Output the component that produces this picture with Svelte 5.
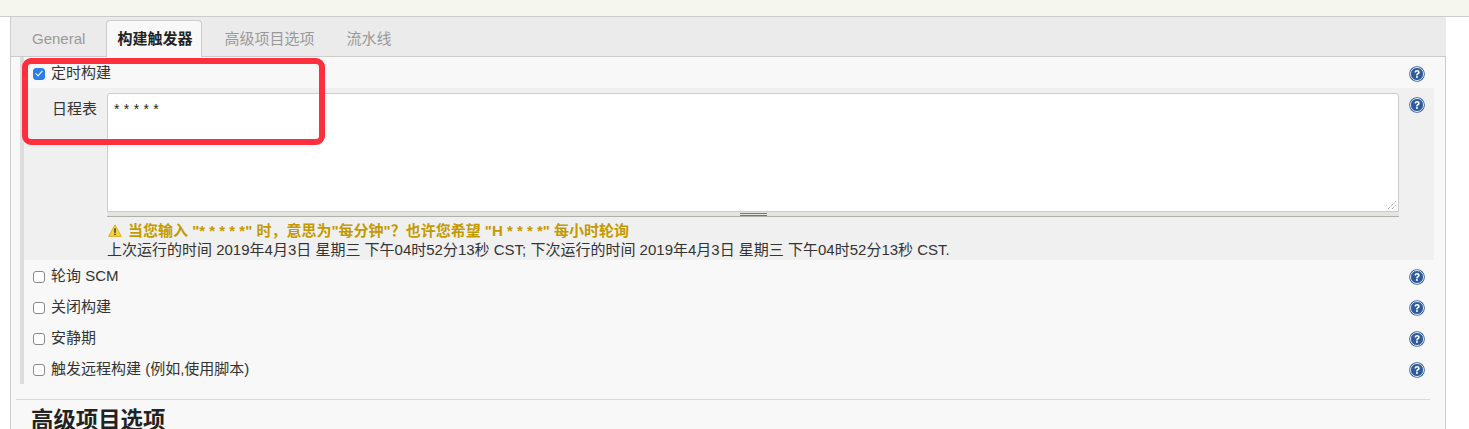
<script>
  const tabs = [
    { label: 'General', active: false },
    { label: '构建触发器', active: true },
    { label: '高级项目选项', active: false },
    { label: '流水线', active: false }
  ];
  const triggers = ['轮询 SCM', '关闭构建', '安静期', '触发远程构建 (例如,使用脚本)'];
</script>

{#snippet help()}
  <svg class="help" width="16" height="16" viewBox="0 0 16 16">
    <circle cx="8" cy="8" r="7.8" fill="#2f5a98" />
    <circle cx="8" cy="8" r="6.5" fill="none" stroke="#e6edf6" stroke-width="1" />
    <circle cx="8" cy="8" r="5.6" fill="#2d5b9b" />
    <path d="M5.5 6.4C5.6 4.8 6.7 4 8.1 4c1.5 0 2.6.8 2.6 2.2 0 1-.6 1.6-1.3 2-.5.3-.7.6-.7 1.2H7.2c0-1 .3-1.6 1-2.1.5-.3.8-.6.8-1.1 0-.5-.4-.8-.9-.8-.6 0-1 .4-1 1z" fill="#fff" />
    <rect x="7.1" y="10.1" width="1.7" height="1.8" fill="#fff" />
  </svg>
{/snippet}

<div class="page">
  <div class="topband"></div>
  <div class="panel">
    <nav class="tabs">
      {#each tabs as t}
        <span class="tab" class:active={t.active}>{t.label}</span>
      {/each}
    </nav>
    <div class="content">
      <div class="section">
        <div class="row">
          <input type="checkbox" checked />
          <span class="label">定时构建</span>
          {@render help()}
        </div>
        <div class="schedule">
          <div class="sch-label">日程表</div>
          <div class="sch-main">
            <div class="area">* * * * *<svg class="resize" width="10" height="10" viewBox="0 0 10 10"><path d="M1 9L9 1M5 9L9 5" stroke="#777" stroke-width="1" stroke-dasharray="1 1" fill="none"/></svg></div>
            <div class="grip"><span></span></div>
            <div class="warn">
              <svg width="14" height="13" viewBox="0 0 14 13"><path d="M7 .8L13.4 12.4H.6z" fill="#f6d23c" stroke="#d8a814" stroke-width=".8" stroke-linejoin="round"/><rect x="6.3" y="4.2" width="1.4" height="4.6" fill="#333"/><rect x="6.3" y="9.6" width="1.4" height="1.5" fill="#333"/></svg>
              <span>当您输入 "* * * * *" 时，意思为"每分钟"？也许您希望 "H * * * *" 每小时轮询</span>
            </div>
            <div class="info">上次运行的时间 2019年4月3日 星期三 下午04时52分13秒 CST; 下次运行的时间 2019年4月3日 星期三 下午04时52分13秒 CST.</div>
          </div>
          <div class="sch-help">{@render help()}</div>
        </div>
        {#each triggers as t}
          <div class="row">
            <input type="checkbox" />
            <span class="label">{t}</span>
            {@render help()}
          </div>
        {/each}
      </div>
      <div class="divider"></div>
      <h2>高级项目选项</h2>
    </div>
    <div class="mark"></div>
  </div>
</div>

<style>
  :global(body) {
    margin: 0;
    background: #fff;
    overflow: hidden;
  }
  .page {
    height: 429px;
    overflow: hidden;
    font-family: "Liberation Sans", "Noto Sans CJK SC", sans-serif;
    font-size: 15px;
    color: #333;
  }
  .topband {
    height: 16px;
    background: #f5f7ef;
    border-bottom: 1px solid #ccc;
  }
  .panel {
    position: relative;
    margin-left: 10px;
    width: 1436px;
    box-sizing: border-box;
    height: 412px;
    background: #f8f8f8;
    border-left: 1px solid #ccc;
    border-right: 1px solid #ccc;
  }
  .tabs {
    display: flex;
    height: 40px;
    box-sizing: border-box;
    background: #ebebeb;
    border-bottom: 1px solid #ccc;
    padding: 3px 0 0 10px;
    margin-right: -1px;
  }
  .tab {
    display: block;
    height: 36px;
    line-height: 38px;
    padding: 0 11px;
    margin-right: 10px;
    color: #999;
  }
  .tab.active {
    height: 37px;
    line-height: 36px;
    color: #222;
    font-weight: bold;
    background: #f8f8f8;
    border: 1px solid #ccc;
    border-bottom: none;
    border-radius: 4px 4px 0 0;
    box-sizing: border-box;
    margin-right: 11px;
    width: 96px;
    padding: 0 0 0 10px;
  }
  .content {
    padding-left: 9px;
  }
  .section {
    border-left: 4px solid #ddd;
    height: 327px;
    width: 1410px;
  }
  .row {
    display: flex;
    align-items: center;
    height: 31px;
    padding: 3px 0 0 9px;
    box-sizing: border-box;
  }
  input[type="checkbox"] {
    appearance: none;
    flex: none;
    position: relative;
    width: 12px;
    height: 12px;
    box-sizing: border-box;
    margin: 0 6px 0 0;
    background: #fff;
    border: 1px solid #8a8a8a;
    border-radius: 3px;
  }
  input[type="checkbox"]:checked {
    background: #2b7de9;
    border-color: #2b7de9;
  }
  input[type="checkbox"]:checked::after {
    content: "";
    position: absolute;
    left: 3px;
    top: 0;
    width: 3px;
    height: 6px;
    border: solid #fff;
    border-width: 0 1.5px 1.5px 0;
    transform: rotate(42deg);
  }
  .label {
    flex: 1;
    line-height: 20px;
    margin-top: -2px;
  }
  .help {
    display: block;
    margin-right: 9px;
  }
  .schedule {
    display: flex;
    background: #f0f0f0;
    height: 172px;
  }
  .sch-label {
    width: 83px;
    box-sizing: border-box;
    padding: 10px 10px 0 0;
    text-align: right;
    line-height: 21px;
  }
  .sch-main {
    width: 1292px;
    padding-top: 5px;
  }
  .sch-help {
    padding: 9px 0 0 10px;
  }
  .area {
    position: relative;
    height: 119px;
    box-sizing: border-box;
    background: #fff;
    border: 1px solid #ccc;
    border-radius: 3px 3px 0 0;
    padding: 7px 6px 6px;
    font-size: 14px;
    line-height: 16px;
    color: #222;
    word-spacing: 0.5px;
  }
  .resize {
    position: absolute;
    right: 1px;
    bottom: 1px;
  }
  .grip {
    height: 5px;
    box-sizing: border-box;
    background: #e4e4e4;
    border-bottom: 1px solid #b0b0a8;
    display: flex;
    justify-content: center;
    padding-top: 1px;
  }
  .grip span {
    width: 27px;
    height: 3px;
    box-sizing: border-box;
    border-top: 1px solid #777;
    border-bottom: 1px solid #777;
  }
  .warn {
    display: flex;
    align-items: center;
    gap: 7px;
    height: 20px;
    margin-top: 2px;
    margin-bottom: 1px;
    color: #c49a00;
    font-weight: bold;
  }
  .warn svg {
    flex: none;
    margin: 2px 0 0 1px;
  }
  .warn span {
    margin-left: -1px;
  }
  .info {
    line-height: 19px;
    color: #333;
  }
  .divider {
    height: 1px;
    background: #d9d9d9;
    margin: 15px 0 0 -4px;
    width: 1414px;
  }
  h2 {
    margin: 7px 0 0 11px;
    font-size: 22.4px;
    line-height: 28px;
    font-weight: bold;
    color: #222;
  }
  .mark {
    position: absolute;
    left: 11px;
    top: 41px;
    width: 303px;
    height: 87px;
    box-sizing: border-box;
    border: 6px solid #ff2f3e;
    border-radius: 9px;
  }
</style>
